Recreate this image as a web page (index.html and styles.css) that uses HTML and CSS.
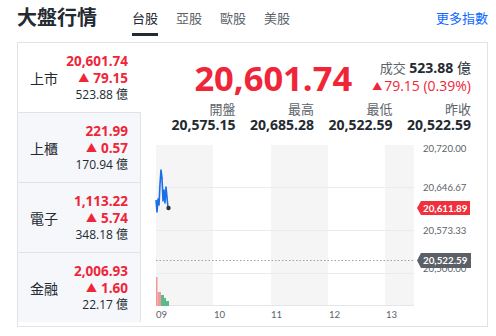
FILE: index.html
```
<!DOCTYPE html>
<html lang="zh-Hant">
<head>
<meta charset="utf-8">
<title>大盤行情</title>
<link rel="stylesheet" href="styles.css">
</head>
<body>
<header class="top">
  <h1 class="title">大盤行情</h1>
  <nav class="tabs">
    <a class="tab active">台股</a>
    <a class="tab">亞股</a>
    <a class="tab">歐股</a>
    <a class="tab">美股</a>
  </nav>
  <a class="more">更多指數</a>
</header>
<section class="board">
  <ul class="list">
    <li class="item active">
      <span class="name">上市</span>
      <div class="vals">
        <div class="price up">20,601.74</div>
        <div class="chg up"><span class="tri">▲</span>79.15</div>
        <div class="vol">523.88 億</div>
      </div>
    </li>
    <li class="item">
      <span class="name">上櫃</span>
      <div class="vals">
        <div class="price up">221.99</div>
        <div class="chg up"><span class="tri">▲</span>0.57</div>
        <div class="vol">170.94 億</div>
      </div>
    </li>
    <li class="item">
      <span class="name">電子</span>
      <div class="vals">
        <div class="price up">1,113.22</div>
        <div class="chg up"><span class="tri">▲</span>5.74</div>
        <div class="vol">348.18 億</div>
      </div>
    </li>
    <li class="item">
      <span class="name">金融</span>
      <div class="vals">
        <div class="price up">2,006.93</div>
        <div class="chg up"><span class="tri">▲</span>1.60</div>
        <div class="vol">22.17 億</div>
      </div>
    </li>
  </ul>
  <div class="main">
    <div class="quote">
      <div class="big up">20,601.74</div>
      <div class="side">
        <div class="turn"><span class="lbl">成交</span> <b>523.88</b> 億</div>
        <div class="up"><span class="tri2">▲</span>79.15 (0.39%)</div>
      </div>
    </div>
    <div class="stats">
      <div class="stat"><span class="slbl">開盤</span><b class="sval">20,575.15</b></div>
      <div class="stat"><span class="slbl">最高</span><b class="sval">20,685.28</b></div>
      <div class="stat"><span class="slbl">最低</span><b class="sval">20,522.59</b></div>
      <div class="stat"><span class="slbl">昨收</span><b class="sval">20,522.59</b></div>
    </div>
    <svg class="chart" width="346" height="192" viewBox="141 134 346 192" xmlns="http://www.w3.org/2000/svg">
      <rect x="157" y="145" width="57" height="161" fill="#f5f5f5"/>
      <rect x="272" y="145" width="57" height="161" fill="#f5f5f5"/>
      <rect x="386" y="145" width="29" height="161" fill="#f5f5f5"/>
      <line x1="157" y1="187.5" x2="415" y2="187.5" stroke="#ebebeb"/>
      <line x1="157" y1="230.5" x2="415" y2="230.5" stroke="#ebebeb"/>
      <line x1="157" y1="273.5" x2="415" y2="273.5" stroke="#ebebeb"/>
      <line x1="157" y1="305.5" x2="415" y2="305.5" stroke="#e6e6e6"/>
      <line x1="157" y1="260.5" x2="415" y2="260.5" stroke="#a0a0a0" stroke-dasharray="1.5 2"/>
      <rect x="157" y="277" width="1.5" height="29" fill="#f29a9a"/>
      <rect x="158.5" y="292" width="3.5" height="14" fill="#f09a9a"/>
      <rect x="162" y="295" width="3" height="11" fill="#5dbb8b"/>
      <rect x="165" y="298" width="2" height="8" fill="#5dbb8b"/>
      <rect x="167" y="301" width="3" height="5" fill="#5dbb8b"/>
      <path d="M157,200 L158,212 L159,199 L160,205 L161,184 L162,170 L163,178 L164,201 L165,190 L166,203 L167,187 L168,197 L169,208" fill="none" stroke="#1a6ee6" stroke-width="1.6" stroke-linejoin="round"/>
      <circle cx="169.5" cy="208" r="2.2" fill="#333"/>
      <g class="ax">
        <text x="424" y="152">20,720.00</text>
        <text x="424" y="191">20,646.67</text>
        <text x="424" y="234">20,573.33</text>
        <text x="424" y="272">20,500.00</text>
      </g>
      <polygon points="418,208 422,201 471,201 471,215 422,215" fill="#f0303c"/>
      <text class="tagt" x="424" y="211.8">20,611.89</text>
      <polygon points="418,260.5 422,253 472,253 472,268 422,268" fill="#5a6066"/>
      <text class="tagt" x="424" y="264.3">20,522.59</text>
      <g class="ax">
        <text x="157" y="318">09</text>
        <text x="215" y="318">10</text>
        <text x="272" y="318">11</text>
        <text x="330" y="318">12</text>
        <text x="387" y="318">13</text>
      </g>
    </svg>
  </div>
</section>
</body>
</html>
```
FILE: styles.css
```
* { box-sizing: border-box; }
html, body { margin: 0; padding: 0; background: #fff; }
body {
  width: 496px;
  height: 336px;
  overflow: hidden;
  font-family: "Open Sans", "Noto Sans CJK TC", sans-serif;
  color: #232a31;
}
.top {
  display: flex;
  align-items: flex-start;
  height: 42px;
  padding-left: 17px;
}
.title {
  margin: 0;
  padding-top: 4px;
  font-size: 20px;
  line-height: 28px;
  font-weight: 700;
  color: #232a31;
}
.tabs {
  display: flex;
  gap: 18px;
  margin-left: 35px;
}
.tab {
  display: block;
  padding-top: 9px;
  padding-bottom: 6px;
  font-size: 13px;
  line-height: 18px;
  color: #5b636a;
  border-bottom: 3px solid transparent;
}
.tab.active {
  color: #232a31;
  border-bottom-color: #232a31;
}
.more {
  margin-left: auto;
  padding-top: 9px;
  padding-right: 8px;
  font-size: 13px;
  line-height: 18px;
  color: #0f69ff;
}
.board {
  display: flex;
  margin-left: 17px;
  width: 471px;
  height: 285px;
  border: 1px solid #e0e4e9;
}
.list {
  list-style: none;
  margin: 0;
  padding: 0;
  width: 123px;
  flex: none;
}
.item {
  display: flex;
  align-items: center;
  justify-content: space-between;
  height: 70px;
  padding: 0 12px 0 12px;
  background: #f5f7fa;
  border-right: 1px solid #e0e4e9;
  border-top: 1px solid #e0e4e9;
}
.item.active {
  height: 69px;
  background: #fff;
  border-top: 0;
  border-right-color: transparent;
}
.name {
  font-size: 14px;
  color: #232a31;
}
.vals {
  text-align: right;
}
.price, .chg {
  font-size: 13.5px;
  line-height: 17px;
  font-weight: 700;
}
.vol {
  font-size: 12px;
  line-height: 16px;
  color: #232a31;
}
.up { color: #ee2638; }
.tri {
  font-size: 11px;
  margin-right: 4px;
  position: relative;
  top: -1px;
}
.main {
  flex: 1;
  display: flex;
  flex-direction: column;
  padding-top: 15px;
}
.quote {
  display: flex;
  justify-content: flex-end;
  align-items: flex-start;
  gap: 20px;
  padding-right: 16px;
}
.big {
  font-size: 34.5px;
  line-height: 40px;
  font-weight: 700;
}
.side {
  padding-top: 1px;
  text-align: right;
  font-size: 14px;
  line-height: 17px;
}
.turn { color: #232a31; }
.turn .lbl { color: #5b636a; font-size: 13px; }
.turn b { font-weight: 700; }
.tri2 {
  font-size: 10px;
  margin-right: 2px;
  position: relative;
  top: -1px;
}
.stats {
  display: grid;
  grid-template-columns: repeat(4, 78.5px);
  justify-content: end;
  padding-right: 16px;
  margin-top: 4px;
}
.stat {
  display: flex;
  flex-direction: column;
  align-items: flex-end;
}
.slbl {
  font-size: 13px;
  line-height: 15px;
  color: #5b636a;
}
.sval {
  font-size: 14px;
  line-height: 15px;
  font-weight: 700;
  color: #232a31;
}
.chart {
  display: block;
  margin-top: 2px;
  margin-left: -1px;
}
.ax text {
  font-family: "Lato", "Open Sans", sans-serif;
  font-size: 9.6px;
  fill: #5b636a;
}
.tagt {
  font-family: "Lato", "Open Sans", sans-serif;
  font-size: 9.8px;
  font-weight: 700;
  fill: #fff;
}
```
